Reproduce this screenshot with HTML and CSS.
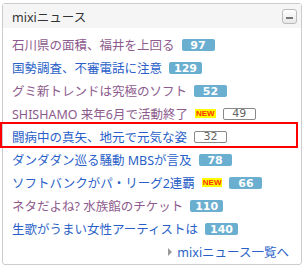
FILE: index.html
```html
<!DOCTYPE html>
<html lang="ja">
<head>
  <meta charset="UTF-8">
  <title>mixiニュース</title>
  <link rel="stylesheet" href="styles.css">
</head>
<body>

<div class="panel">
  <div class="panel-head">
    <h2>mixiニュース</h2>
    <button class="fold" title="閉じる"><span></span></button>
  </div>

  <ul class="news">
    <li><a class="seen" href="#">石川県の面積、福井を上回る</a><span class="count">97</span></li>
    <li><a href="#">国勢調査、不審電話に注意</a><span class="count">129</span></li>
    <li><a class="seen" href="#">グミ新トレンドは究極のソフト</a><span class="count">52</span></li>
    <li><a class="seen" href="#">SHISHAMO 来年6月で活動終了</a><span class="new">NEW</span><span class="count plain">49</span></li>
    <li class="hl"><a href="#">闘病中の真矢、地元で元気な姿</a><span class="count plain">32</span></li>
    <li><a href="#">ダンダダン巡る騒動 MBSが言及</a><span class="count">78</span></li>
    <li><a href="#">ソフトバンクがパ・リーグ2連覇</a><span class="new">NEW</span><span class="count">66</span></li>
    <li><a class="seen" href="#">ネタだよね? 水族館のチケット</a><span class="count">110</span></li>
    <li><a href="#">生歌がうまい女性アーティストは</a><span class="count">140</span></li>
  </ul>

  <div class="more"><a href="#">mixiニュース一覧へ</a></div>
</div>

</body>
</html>
```

FILE: styles.css
```css
body {
  margin: 0;
  font-family: "Noto Sans", "Noto Sans CJK JP", sans-serif;
  background: #fff;
}
.panel {
  margin: 3px 2px 2px 2px;
  height: 262px;
  border: 1px solid #ccc;
  border-radius: 3px;
  box-sizing: border-box;
}
.panel-head {
  display: flex;
  align-items: center;
  justify-content: space-between;
  height: 24px;
  padding: 0 4px 0 9px;
  background: #f5f5f5;
}
.panel-head h2 { margin: 0; font-size: 12.5px; font-weight: normal; color: #333; }
.fold {
  width: 15px; height: 15px; padding: 0;
  border: 1px solid #bbb; border-radius: 3px;
  background: linear-gradient(#fff, #e8e8e8);
  display: flex; align-items: flex-end; justify-content: center;
}
.fold span { display: block; width: 7px; height: 2px; background: #777; margin-bottom: 4px; }

.news { list-style: none; margin: 0; padding: 5px 0 0 9px; }
.news li { display: flex; align-items: center; height: 23px; font-size: 12.5px; }
.news a { color: #2a5fc8; text-decoration: none; white-space: nowrap; }
.news a.seen { color: #8d5b8d; }

.count {
  margin-left: 7px;
  width: 33px; height: 12px; line-height: 12px;
  border-radius: 2px;
  background: #6aaed0; color: #fff;
  font: bold 11px "DejaVu Sans", sans-serif;
  text-align: center;
}
.count.plain {
  box-sizing: border-box; height: 12px; line-height: 10px;
  background: #fff; color: #666; border: 1px solid #888;
  font-weight: normal;
}
.new {
  margin-left: 7px;
  padding: 0 1px;
  background: #ff0; color: #f30;
  font: bold 8px "Liberation Sans", sans-serif;
  line-height: 9px;
}
.news li.hl { position: relative; }
.news li.hl::after {
  content: "";
  position: absolute;
  left: -12px; right: 3px; top: -3px; bottom: 0;
  border: 2px solid #f00;
}

.more { text-align: right; padding: 2px 12px 0 0; font-size: 12.5px; }
.more a { color: #2a5fc8; text-decoration: none; }
.more a::before {
  content: "";
  display: inline-block;
  border-left: 4px solid #999;
  border-top: 4px solid transparent; border-bottom: 4px solid transparent;
  margin-right: 5px;
  vertical-align: 1px;
}
```
